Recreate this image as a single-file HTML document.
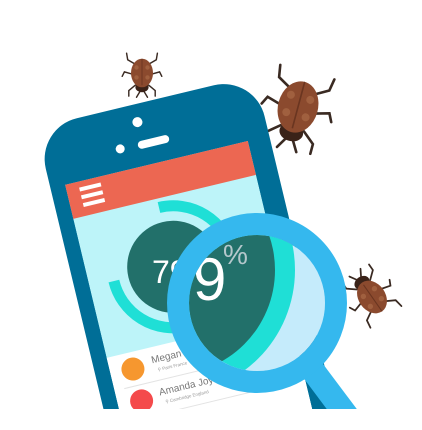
<!DOCTYPE html>
<html><head><style>html,body{margin:0;padding:0;background:#fff;width:422px;height:430px;overflow:hidden}svg{display:block}</style></head>
<body>
<svg width="422" height="430" viewBox="0 0 422 430" xmlns="http://www.w3.org/2000/svg" font-family="Liberation Sans, sans-serif">
<defs>
<g id="bug">
 <g stroke="#3a2a22" stroke-width="1.3" fill="none" stroke-linecap="round">
  <path d="M-6 -8 L-13 -12 L-14 -18"/><path d="M6 -8 L13 -12 L14 -18"/>
  <path d="M-9 1 L-16 -1 L-18 3"/><path d="M9 1 L16 -1 L18 3"/>
  <path d="M-6 11 L-12 16 L-12 21"/><path d="M6 11 L12 16 L12 21"/>
  <path d="M-2 17 L-5 22"/><path d="M2 17 L5 22"/>
 </g>
 <ellipse cx="0" cy="13" rx="6" ry="4.5" fill="#3a2218"/>
 <ellipse cx="0" cy="0" rx="10" ry="13" fill="#8b4a2e"/>
 <line x1="0" y1="-13" x2="0" y2="11" stroke="#6a3520" stroke-width="0.8"/>
 <circle cx="-5" cy="-5" r="2" fill="#a0603f"/><circle cx="5" cy="-5" r="2" fill="#a0603f"/>
 <circle cx="-5" cy="4" r="2" fill="#a0603f"/><circle cx="5" cy="4" r="2" fill="#a0603f"/>
</g>
<clipPath id="scr"><rect x="15" y="62" width="188" height="400"/></clipPath>
<clipPath id="lens"><circle cx="257" cy="303" r="68"/></clipPath>
</defs>

<use href="#bug" transform="translate(142,73) scale(1.1)"/>
<use href="#bug" transform="translate(298,107) rotate(15) scale(2)"/>
<use href="#bug" transform="translate(372,297) rotate(145) scale(1.35)"/>

<g transform="translate(36,128) rotate(-13.5)">
 <rect x="0" y="0" width="225" height="420" rx="42" fill="#006e97"/>
 <circle cx="100" cy="18" r="5" fill="#fff"/>
 <circle cx="77" cy="40" r="4.5" fill="#fff"/>
 <rect x="95" y="37" width="32" height="8" rx="4" fill="#fff"/>
 <g clip-path="url(#scr)">
  <rect x="15" y="62" width="188" height="400" fill="#bdf4f9"/>
  <rect x="15" y="62" width="188" height="35" fill="#ec6752"/>
  <rect x="28" y="68" width="22" height="4" fill="#fff"/>
  <rect x="28" y="76" width="22" height="4" fill="#fff"/>
  <rect x="28" y="84" width="22" height="4" fill="#fff"/>
  <path d="M101 106 A61 61 0 1 1 40 167" fill="none" stroke="#1fdfd6" stroke-width="11"/>
  <circle cx="101" cy="167" r="46" fill="#22706a"/>
  <rect x="15" y="240" width="188" height="200" fill="#fff"/>
  <line x1="25" y1="274" x2="203" y2="274" stroke="#e3e3e3" stroke-width="1"/>
  <line x1="25" y1="307" x2="203" y2="307" stroke="#e3e3e3" stroke-width="1"/>
  <circle cx="38" cy="257" r="11.5" fill="#f6972f"/>
  <circle cx="39" cy="290" r="11.5" fill="#f44a4b"/>
  <text x="58" y="256" font-size="10" fill="#777">Megan</text>
  <text x="62" y="265" font-size="4.5" fill="#999">⚲ Paris France</text>
  <text x="58" y="289" font-size="10" fill="#777">Amanda Joyce</text>
  <text x="62" y="298" font-size="4.5" fill="#999">⚲ Cambridge England</text>
  <circle cx="186" cy="296" r="5" fill="none" stroke="#999" stroke-width="1"/>
  <path d="M186 293.5V298.5M183.5 296H188.5" stroke="#999" stroke-width="1"/>
 </g>
</g>
<text x="152" y="283" font-size="32" fill="#fff">79</text>

<g clip-path="url(#lens)">
 <rect x="180" y="230" width="160" height="150" fill="#c5ebfb"/>
 <circle cx="170" cy="270" r="125" fill="#1fdfd6"/>
 <circle cx="170" cy="270" r="105" fill="#22706a"/>
 <text x="193" y="300" font-size="60" fill="#fff">9</text>
 <text x="223" y="264" font-size="28" fill="#b5c8cc">%</text>
</g>
<line x1="305" y1="360" x2="350" y2="420" stroke="#35b8ee" stroke-width="24"/>
<circle cx="257" cy="303" r="79" fill="none" stroke="#35b8ee" stroke-width="22"/>
<rect x="0" y="409" width="422" height="21" fill="#fff"/>
</svg>
</body></html>
